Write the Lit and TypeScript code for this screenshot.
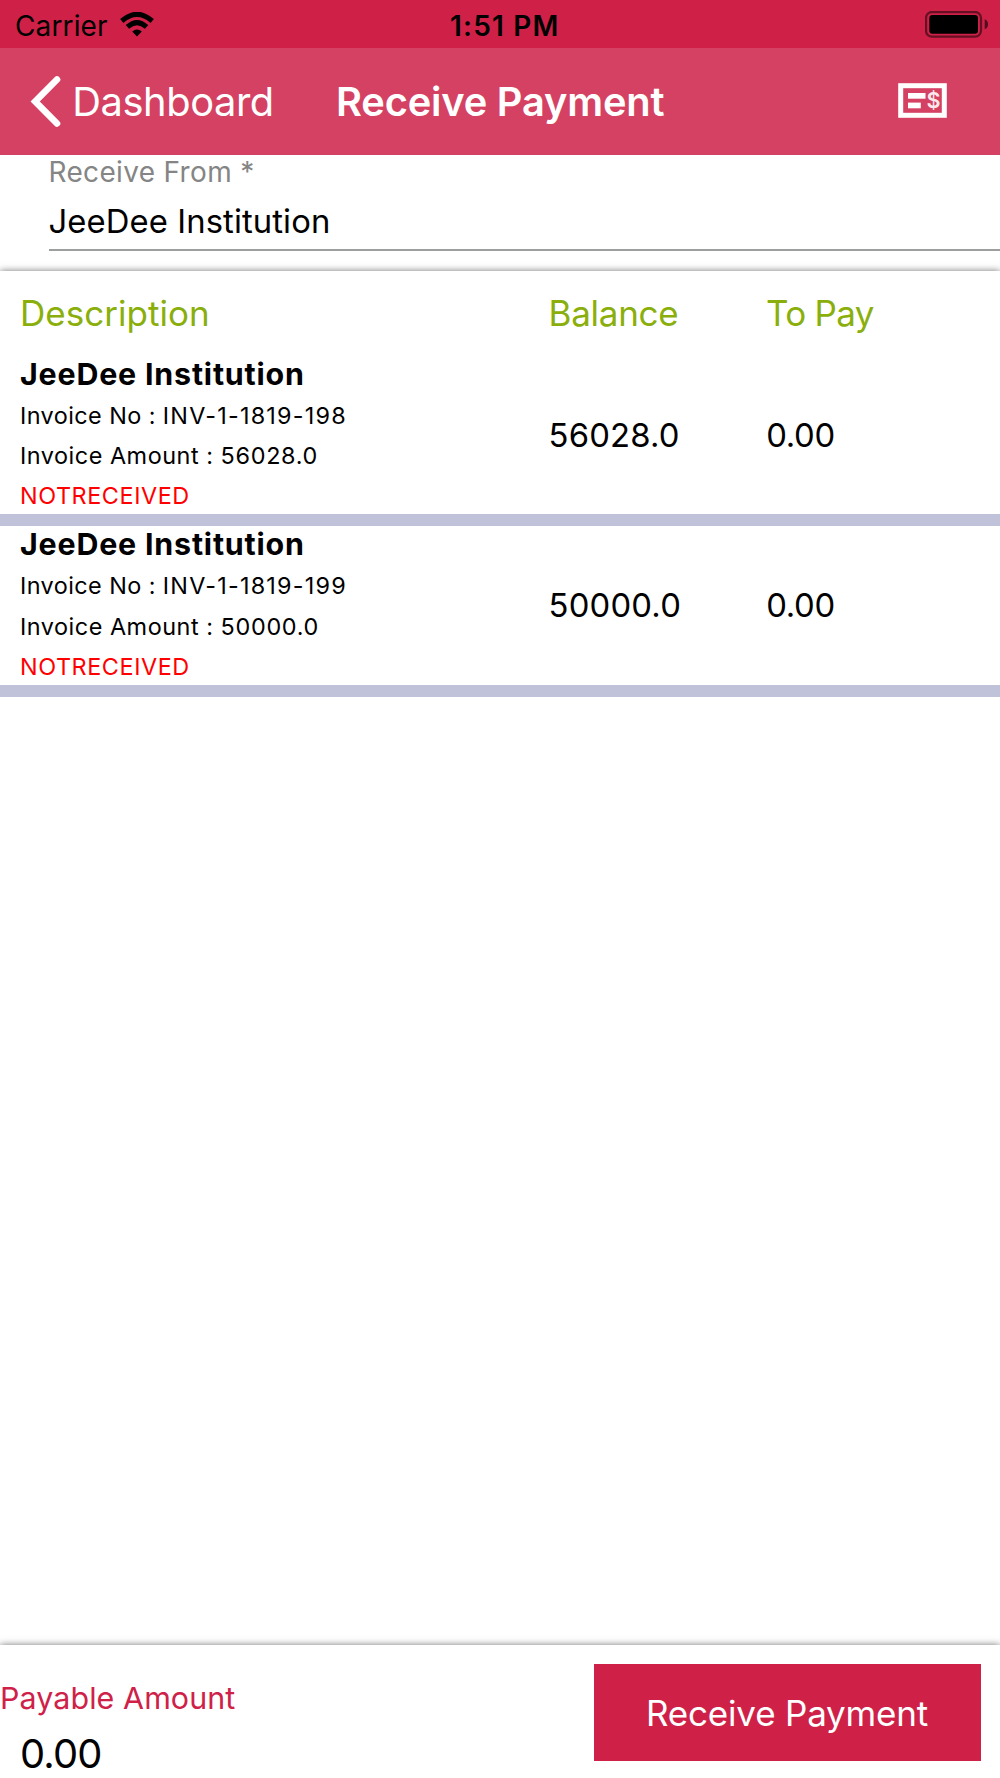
import { LitElement, html, css } from "lit";
import { customElement, property, state } from "lit/decorators.js";

interface Invoice {
  customer: string;
  invoiceNo: string;
  amount: string;
  status: string;
  balance: string;
  toPay: string;
}

@customElement("status-bar")
class StatusBar extends LitElement {
  static styles = css`
    :host {
      display: grid;
      grid-template-columns: 435px 1fr auto;
      align-items: center;
      height: 48px;
      box-sizing: border-box;
      padding: 3px 12px 0 15px;
      background: #cf2148;
      color: #000;
      font-size: 28px;
      line-height: 44px;
    }
    .carrier {
      display: flex;
      align-items: center;
      gap: 12.5px;
      letter-spacing: 0.13px;
    }
    .wifi {
      display: block;
      margin-top: -2px;
    }
    .time {
      font-weight: 600;
      letter-spacing: 1.2px;
    }
    .battery {
      display: block;
      margin-top: -2px;
    }
  `;

  render() {
    return html`
      <div class="carrier">
        <span>Carrier</span>
        <svg class="wifi" width="34" height="25" viewBox="0 0 34 25">
          <path d="M17 24.4 L12.2 19.6 Q17 15.4 21.8 19.6 Z" />
          <path d="M7.4 14.9 Q17 6.2 26.6 14.9" fill="none" stroke="#000" stroke-width="5" />
          <path d="M1.8 9 Q17 -4.4 32.2 9" fill="none" stroke="#000" stroke-width="5" />
        </svg>
      </div>
      <div class="time">1:51 PM</div>
      <svg class="battery" width="63" height="27" viewBox="0 0 63 27">
        <rect x="1" y="1" width="55" height="24.7" rx="6" fill="none" stroke="#000" stroke-opacity="0.5" stroke-width="2.3" />
        <rect x="4.3" y="4" width="48.7" height="18.7" rx="3" />
        <path d="M59.7 8.3 Q63 9.5 63 13.3 Q63 17.1 59.7 18.3 Z" fill-opacity="0.6" />
      </svg>
    `;
  }
}

@customElement("nav-bar")
class NavBar extends LitElement {
  @property() back = "";
  @property() heading = "";

  static styles = css`
    :host {
      display: grid;
      grid-template-columns: 306px 1fr auto;
      align-items: center;
      height: 107px;
      box-sizing: border-box;
      padding: 0 53px 0 30px;
      background: #d54163;
      color: #fff;
      font-size: 39.8px;
      line-height: 48px;
    }
    .back {
      display: flex;
      align-items: center;
      gap: 11.3px;
      letter-spacing: -0.42px;
    }
    .heading {
      font-weight: 600;
      letter-spacing: -0.18px;
    }
    svg {
      display: block;
    }
    .ticket {
      margin-top: -2px;
    }
    .currency {
      font: 600 22px Inter, sans-serif;
    }
  `;

  render() {
    return html`
      <div class="back">
        <svg width="31" height="52" viewBox="0 0 31 52">
          <path d="M27 3.5 L5.2 25.5 L27 47.5" fill="none" stroke="#fff" stroke-width="6.6" stroke-linecap="round" />
        </svg>
        <span>${this.back}</span>
      </div>
      <div class="heading">${this.heading}</div>
      <svg class="ticket" width="49" height="35" viewBox="0 0 49 35">
        <rect x="2.7" y="2.7" width="43.6" height="29.6" fill="none" stroke="#fff" stroke-width="5" />
        <rect x="10" y="10" width="17.5" height="5.7" fill="#fff" />
        <rect x="10" y="19.6" width="12.8" height="5.7" fill="#fff" />
        <text class="currency" x="35.5" y="25.2" text-anchor="middle" textLength="14" lengthAdjust="spacingAndGlyphs" fill="#fff" fill-opacity="0.9">$</text>
      </svg>
    `;
  }
}

@customElement("invoice-row")
class InvoiceRow extends LitElement {
  @property({ attribute: false }) invoice!: Invoice;

  static styles = css`
    :host {
      display: grid;
      grid-template-columns: 528.5px 217.7px 1fr;
      height: 170.5px;
      box-sizing: border-box;
      padding-left: 20px;
      border-bottom: 12px solid #c0c2d9;
      color: #000;
    }
    .details {
      font-size: 23.4px;
      line-height: 40.3px;
      white-space: nowrap;
    }
    .customer {
      font-size: 30.4px;
      font-weight: 700;
      line-height: 36px;
      letter-spacing: 0.81px;
      padding-bottom: 4px;
    }
    .number {
      letter-spacing: 0.43px;
    }
    .number-value {
      letter-spacing: 1.2px;
    }
    .amount {
      letter-spacing: 0.53px;
    }
    .amount-value {
      letter-spacing: 0.7px;
    }
    .status {
      color: #ff0000;
      letter-spacing: 0.57px;
    }
    .figure {
      align-self: center;
      padding-bottom: 3px;
      font-size: 32.8px;
      line-height: 40px;
      letter-spacing: 0.2px;
    }
    .pay {
      letter-spacing: -0.3px;
    }
  `;

  render() {
    const i = this.invoice;
    return html`
      <div class="details">
        <div class="customer">${i.customer}</div>
        <div class="number">Invoice No : <span class="number-value">${i.invoiceNo}</span></div>
        <div class="amount">Invoice Amount : <span class="amount-value">${i.amount}</span></div>
        <div class="status">${i.status}</div>
      </div>
      <div class="figure">${i.balance}</div>
      <div class="figure pay">${i.toPay}</div>
    `;
  }
}

@customElement("app-root")
class AppRoot extends LitElement {
  @state() private invoices: Invoice[] = [
    { customer: "JeeDee Institution", invoiceNo: "INV-1-1819-198", amount: "56028.0", status: "NOTRECEIVED", balance: "56028.0", toPay: "0.00" },
    { customer: "JeeDee Institution", invoiceNo: "INV-1-1819-199", amount: "50000.0", status: "NOTRECEIVED", balance: "50000.0", toPay: "0.00" },
  ];

  static styles = css`
    :host {
      display: flex;
      flex-direction: column;
      height: 1778px;
      overflow: hidden;
      background: #fff;
      font-family: Inter, "Liberation Sans", sans-serif;
    }
    .field {
      height: 115.6px;
      box-sizing: border-box;
      padding-left: 48.5px;
    }
    .label {
      color: #858585;
      font-size: 28px;
      line-height: 34px;
      letter-spacing: 0.33px;
    }
    .value {
      padding-top: 4px;
      border-bottom: 2px solid #9c9f9d;
      color: #000;
      font-size: 32.8px;
      line-height: 56px;
      letter-spacing: 0.1px;
    }
    .list {
      flex: 1;
      background: #fff;
      box-shadow: 0 0 7px rgba(0, 0, 0, 0.55);
    }
    .columns {
      display: grid;
      grid-template-columns: 528.5px 217.5px 1fr;
      padding: 1.5px 0 0 20px;
      color: #8aaf0c;
      font-size: 35px;
      line-height: 83.7px;
    }
    .description {
      letter-spacing: 0.03px;
    }
    .balance {
      letter-spacing: -0.26px;
    }
    .to-pay {
      letter-spacing: -0.7px;
    }
    .footer {
      display: flex;
      justify-content: space-between;
      height: 133.3px;
      box-sizing: border-box;
      padding: 19.3px 19px 0 0;
      background: #fff;
      box-shadow: 0 0 7px rgba(0, 0, 0, 0.55);
    }
    .caption {
      padding-top: 15.5px;
      color: #cf2148;
      font-size: 30.4px;
      line-height: 36px;
      letter-spacing: 0.1px;
    }
    .total {
      padding: 14px 0 0 20px;
      color: #000;
      font-size: 39.8px;
      line-height: 48px;
      letter-spacing: -0.8px;
    }
    .pay-button {
      width: 387px;
      height: 97px;
      padding: 0 1px 0 0;
      border: 0;
      border-radius: 0;
      background: #cf2148;
      color: #fff;
      font: 400 35px Inter, "Liberation Sans", sans-serif;
      letter-spacing: -0.2px;
    }
  `;

  render() {
    return html`
      <status-bar></status-bar>
      <nav-bar back="Dashboard" heading="Receive Payment"></nav-bar>
      <div class="field">
        <div class="label">Receive From *</div>
        <div class="value">JeeDee Institution</div>
      </div>
      <div class="list">
        <div class="columns">
          <span class="description">Description</span>
          <span class="balance">Balance</span>
          <span class="to-pay">To Pay</span>
        </div>
        ${this.invoices.map((invoice) => html`<invoice-row .invoice=${invoice}></invoice-row>`)}
      </div>
      <div class="footer">
        <div>
          <div class="caption">Payable Amount</div>
          <div class="total">0.00</div>
        </div>
        <button class="pay-button">Receive Payment</button>
      </div>
    `;
  }
}
